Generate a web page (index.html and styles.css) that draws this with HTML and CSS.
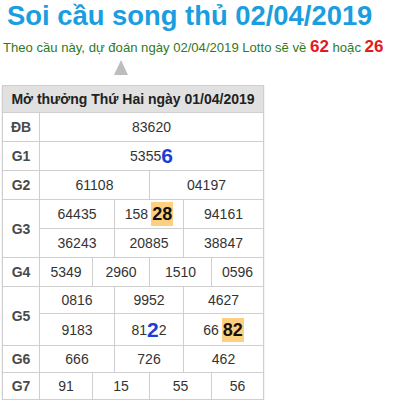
FILE: index.html
```html
<!DOCTYPE html>
<html lang="vi">
<head>
<meta charset="utf-8">
<link rel="stylesheet" href="styles.css">
</head>
<body>
<h1 class="title">Soi cầu song thủ 02/04/2019</h1>
<p class="predict">Theo cầu này, dự đoán ngày 02/04/2019 Lotto sẽ về <b class="red">62</b> hoặc <b class="red">26</b></p>
<div class="arrow-wrap"><div class="arrow"></div></div>
<div class="kq">
  <div class="head">Mở thưởng Thứ Hai ngày 01/04/2019</div>
  <div class="row">
    <div class="lbl">ĐB</div>
    <div class="data"><div class="sub c1"><div class="cell">83620</div></div></div>
  </div>
  <div class="row">
    <div class="lbl">G1</div>
    <div class="data"><div class="sub c1"><div class="cell">5355<b class="blue">6</b></div></div></div>
  </div>
  <div class="row">
    <div class="lbl">G2</div>
    <div class="data"><div class="sub c2"><div class="cell">61108</div><div class="cell">04197</div></div></div>
  </div>
  <div class="row">
    <div class="lbl">G3</div>
    <div class="data">
      <div class="sub c3"><div class="cell">64435</div><div class="cell">158<b class="hl">28</b></div><div class="cell">94161</div></div>
      <div class="sub c3"><div class="cell">36243</div><div class="cell">20885</div><div class="cell">38847</div></div>
    </div>
  </div>
  <div class="row">
    <div class="lbl">G4</div>
    <div class="data"><div class="sub c4"><div class="cell">5349</div><div class="cell">2960</div><div class="cell">1510</div><div class="cell">0596</div></div></div>
  </div>
  <div class="row">
    <div class="lbl">G5</div>
    <div class="data">
      <div class="sub c3 short"><div class="cell">0816</div><div class="cell">9952</div><div class="cell">4627</div></div>
      <div class="sub c3 tall"><div class="cell">9183</div><div class="cell">81<b class="blue">2</b>2</div><div class="cell">66<b class="hl">82</b></div></div>
    </div>
  </div>
  <div class="row">
    <div class="lbl">G6</div>
    <div class="data"><div class="sub c3 short"><div class="cell">666</div><div class="cell">726</div><div class="cell">462</div></div></div>
  </div>
  <div class="row">
    <div class="lbl">G7</div>
    <div class="data"><div class="sub c4 short"><div class="cell">91</div><div class="cell">15</div><div class="cell">55</div><div class="cell">56</div></div></div>
  </div>
</div>
</body>
</html>
```
FILE: styles.css
```css
html, body {
  margin: 0;
  padding: 0;
  background: #fff;
}
body {
  font-family: "Liberation Sans", Arial, sans-serif;
  color: #333;
}
.title {
  margin: 0;
  padding: 0 0 0 7px;
  font-size: 27.4px;
  line-height: 32px;
  font-weight: bold;
  color: #1a9ee0;
}
.predict {
  margin: 5px 0 0 3px;
  font-size: 13.1px;
  line-height: 20px;
  color: #2f7a1f;
}
.red {
  color: #e3191b;
  font-size: 17px;
}
.arrow-wrap {
  display: flex;
  padding-left: 114px;
  margin-top: 2px;
}
.arrow {
  width: 0;
  height: 0;
  border-left: 7px solid transparent;
  border-right: 7px solid transparent;
  border-bottom: 15px solid #bdbdbd;
}
.kq {
  margin: 10px 0 0 2px;
  width: 260px;
  border: 1px solid #cfcfcf;
  box-shadow: 0 1px 1px #bbb;
  font-size: 14px;
}
.head {
  height: 26px;
  line-height: 26px;
  background: #e1e1e1;
  text-align: center;
  font-weight: bold;
  color: #222;
  font-size: 14px;
}
.row {
  display: grid;
  grid-template-columns: 37px 1fr;
  border-top: 1px solid #cfcfcf;
}
.lbl {
  display: flex;
  align-items: center;
  justify-content: center;
  font-weight: bold;
  color: #4a4a4a;
  border-right: 1px solid #cfcfcf;
}
.data {
  display: flex;
  flex-direction: column;
}
.sub {
  display: grid;
  height: 28px;
}
.sub + .sub {
  border-top: 1px solid #cfcfcf;
}
.sub.short { height: 26px; }
.sub.tall { height: 31px; }
.c1 { grid-template-columns: 1fr; }
.c2 { grid-template-columns: 109px 1fr; }
.c3 { grid-template-columns: 74px 69px 1fr; }
.c4 { grid-template-columns: 52px 57px 62px 1fr; }
.cell {
  display: flex;
  align-items: center;
  justify-content: center;
  color: #333;
}
.cell + .cell {
  border-left: 1px solid #cfcfcf;
}
.blue {
  color: #1a3fd6;
  font-size: 21px;
}
.hl {
  background: #fcd07e;
  color: #111;
  font-size: 18px;
  padding: 2px 1px;
  margin-left: 3px;
  line-height: 20px;
}
```
